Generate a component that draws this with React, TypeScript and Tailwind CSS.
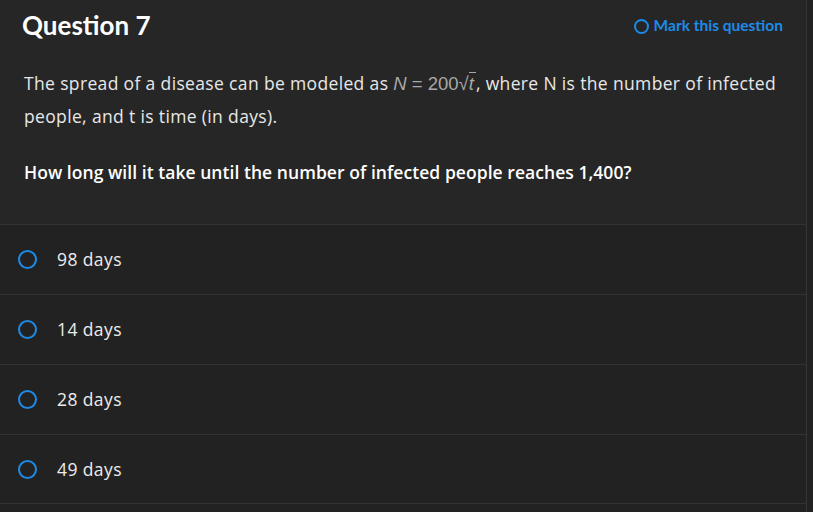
import React from 'react'

const options = ['98 days', '14 days', '28 days', '49 days']

export default function App() {
  return (
    <div className="w-[813px] h-[512px] bg-[#222222] flex overflow-hidden" style={{ fontFamily: '"Open Sans", Lato, sans-serif' }}>
      <div className="w-[807px] border-r border-[#363636] flex flex-col">
        {/* Header + question body */}
        <div className="bg-[#262626] px-6 pt-[9px] h-[224px]">
          <div className="flex items-center justify-between">
            <h1 className="text-[26px] leading-[32px] font-bold text-white -ml-[2px]" style={{ fontFamily: 'Lato, sans-serif' }}>Question 7</h1>
            <button className="flex items-center gap-[5px] text-[#1d8ae6] text-[15.5px] font-bold mr-[-1px] mt-[2px]" style={{ fontFamily: 'Lato, sans-serif' }}>
              <span className="w-[15px] h-[15px] rounded-full border-2 border-[#1d8ae6]"></span>
              Mark this question
            </button>
          </div>
          <p className="mt-[26px] text-[17.5px] leading-[33px] text-[#e8e8e8] tracking-[0.35px]">
            <span>The spread of a disease can be modeled as </span>
            <span className="text-[#a8a8a8] tracking-normal text-[18.5px]" style={{ fontFamily: '"Liberation Sans", Arial, sans-serif' }}>
              <i>N</i> = 200√<span className="border-t border-[#a8a8a8] pr-[2px]"><i>t</i></span>
            </span>
            <span>, where N is the number of infected</span>
            <br />
            <span>people, and t is time (in days).</span>
          </p>
          <p className="mt-[23px] text-[17.5px] leading-[33px] font-semibold text-white tracking-[0.05px]">
            How long will it take until the number of infected people reaches 1,400?
          </p>
        </div>

        {/* Answer options */}
        <div className="flex flex-col">
          {options.map((opt, i) => (
            <div
              key={opt}
              className={`h-[70px] border-t border-[#333333] flex items-center pl-[18px] ${i === options.length - 1 ? 'border-b' : ''}`}
            >
              <span className="w-[19px] h-[19px] rounded-full border-[2.5px] border-[#1d8ae6] shrink-0"></span>
              <span className="ml-[20px] text-[17.5px] tracking-[0.4px] text-[#ececec]">{opt}</span>
            </div>
          ))}
        </div>
      </div>
    </div>
  )
}
